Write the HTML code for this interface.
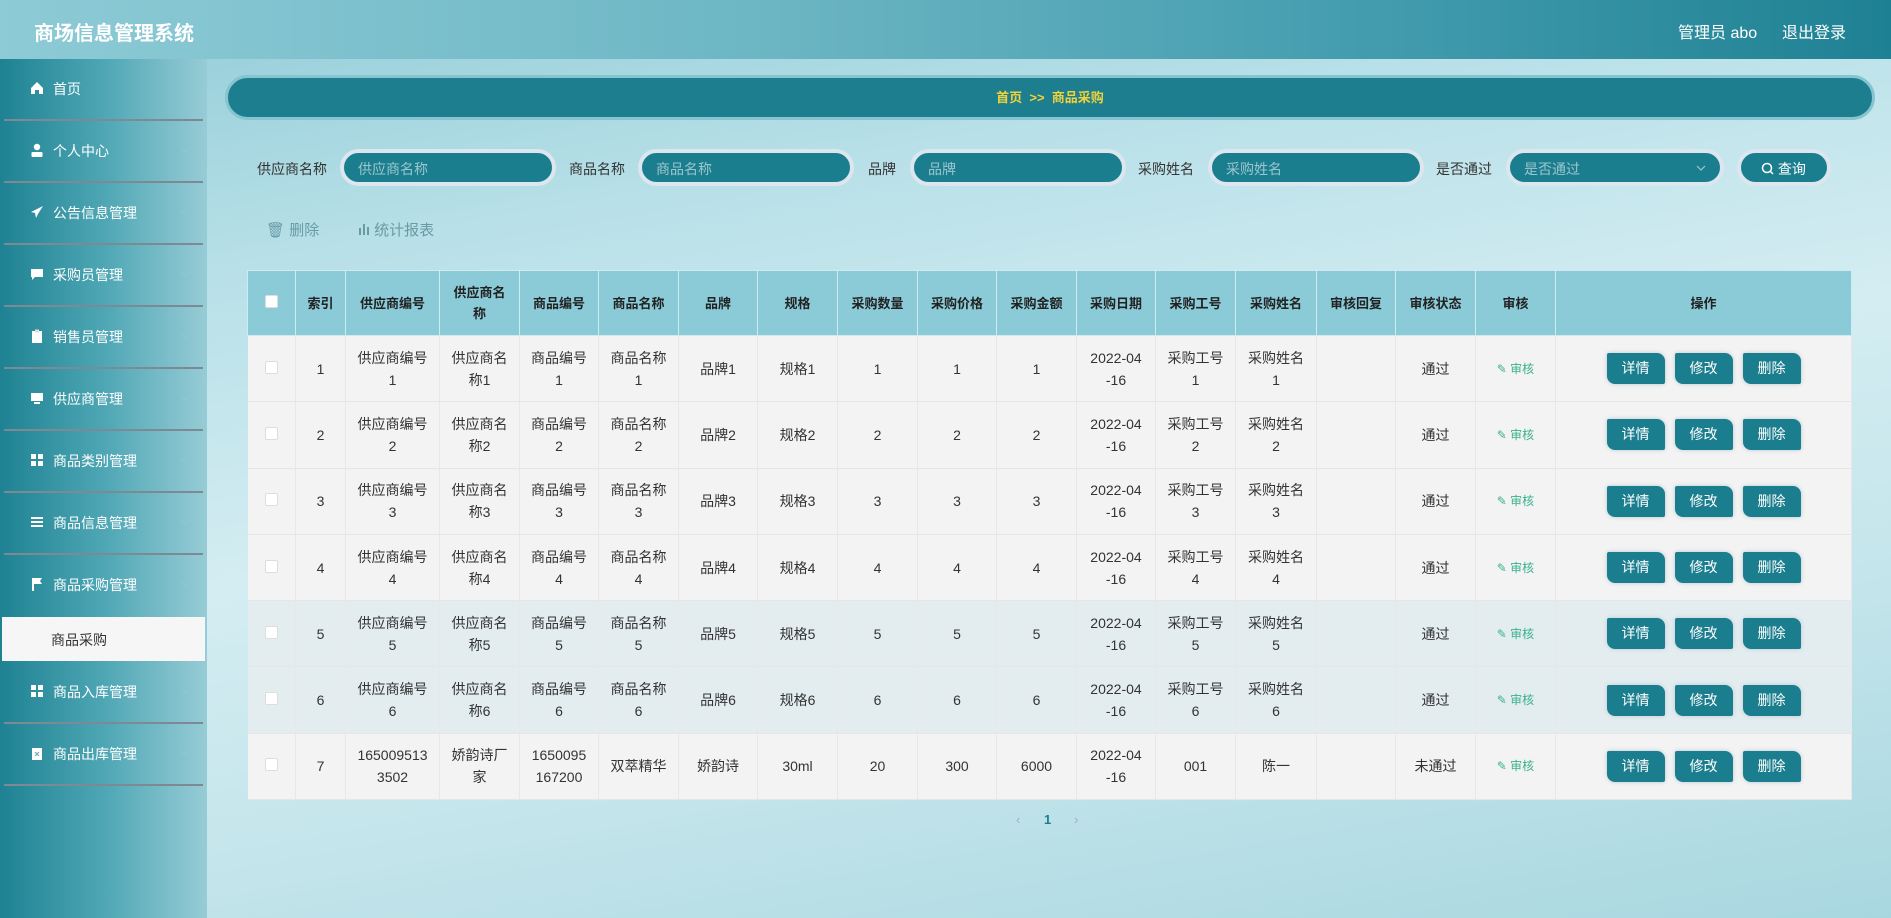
<!DOCTYPE html>
<html><head><meta charset="utf-8">
<style>
*{margin:0;padding:0;box-sizing:border-box}
body{width:1891px;height:918px;overflow:hidden;position:relative;font-family:"Liberation Sans","Noto Sans CJK SC",sans-serif;font-size:14px;color:#333;
background:linear-gradient(170deg,#8fcbd6 0%,#b8e0e8 25%,#d4edf2 50%,#c6e6ec 70%,#a9d7e0 100%);}
.hdr{position:absolute;left:0;top:0;width:1891px;height:59px;background:linear-gradient(90deg,#8dcbd6 0%,#6db6c4 40%,#3f9aac 75%,#1e8193 100%);}
.hdr .t{position:absolute;left:34px;top:17px;color:#fff;font-size:20px;font-weight:bold}
.hdr .r{position:absolute;top:19px;color:#fff;font-size:16px}
.side{position:absolute;left:0;top:59px;width:207px;height:859px;background:linear-gradient(90deg,#1e8292 0%,#4ea6b4 50%,#97ccd6 100%);}
.mi{position:absolute;left:0;width:207px;height:62px;color:#fff;font-size:14px}
.mi .ic{position:absolute;left:30px;top:22px;width:14px;height:14px}
.mi .tx{position:absolute;left:53px;top:20px}
.mi .ar{position:absolute;left:180px;top:26px;width:10px;height:6px}
.mi .ln{position:absolute;left:4px;right:4px;bottom:0;height:2px;background:#7d8a94}
.sub{position:absolute;left:2px;top:617px;width:203px;height:44px;background:#f6f6f6;color:#333;font-size:14px;padding:13px 0 0 49px}
.bc{position:absolute;left:225px;top:75px;width:1650px;height:45px;border-radius:23px;background:#1c7e8e;border:3px solid #86c4cf;text-align:center;color:#f0d23a;font-size:13px;font-weight:bold;line-height:39px}
.lbl{position:absolute;top:159px;font-size:14px;color:#333}
.inp{position:absolute;top:149px;height:37px;border-radius:19px;background:#1b7e8e;border:4px solid #dce6ee;color:#9cc6cf;font-size:14px;padding:6px 0 0 14px}
.btnq{position:absolute;left:1737px;top:149px;width:94px;height:37px;border-radius:19px;background:#1b7e8e;border:4px solid #dce6ee;color:#fff;font-size:14px;padding:6px 0 0 20px}
.tool{position:absolute;top:219px;color:#6a9aa6;font-size:15px}
table{position:absolute;left:247px;top:270px;width:1604px;border-collapse:collapse;table-layout:fixed}
th{background:#8acbd7;height:65px;font-size:13px;font-weight:bold;color:#222;border:1px solid #cfeaf0;line-height:21px}
td{height:66.3px;background:#f3f3f3;text-align:center;font-size:14px;color:#333;border-right:1px solid #e8e8e8;border-bottom:1px solid #e6e6e6;line-height:22px}
tr.h td{background:#e3edf0}
.cb{display:inline-block;width:13px;height:13px;background:#fff;border:1px solid #ddd;border-radius:2px}
.sh{color:#3ab28f;font-size:12px}
.b{display:inline-block;width:58px;height:31px;line-height:31px;background:#1b7e8e;color:#fff;font-size:14px;margin:0 5px;border-radius:2px 8px 2px 8px;box-shadow:0 0 4px #b8c8d0}
.pg{position:absolute;top:812px;font-size:13px}
</style></head><body>
<div class="hdr"><div class="t">商场信息管理系统</div><div class="r" style="left:1678px">管理员 abo</div><div class="r" style="left:1782px">退出登录</div></div>
<div class="side">
<div class="mi" style="top:0"><svg class="ic" viewBox="0 0 14 14"><path d="M7 1L1 7v6h4V9h4v4h4V7z" fill="#fff"/></svg><span class="tx">首页</span><div class="ln"></div></div>
<div class="mi" style="top:62px"><svg class="ic" viewBox="0 0 14 14"><circle cx="7" cy="4" r="3.2" fill="#fff"/><rect x="1.5" y="9" width="11" height="5" rx="1" fill="#fff"/></svg><span class="tx">个人中心</span><svg class="ar" viewBox="0 0 10 6"><path d="M1 1l4 4 4-4" fill="none" stroke="#8fc8d2" stroke-width="1"/></svg><div class="ln"></div></div>
<div class="mi" style="top:124px"><svg class="ic" viewBox="0 0 14 14"><path d="M13 1L1 7l4 1 1 5 2-4 5-8z" fill="#fff"/></svg><span class="tx">公告信息管理</span><svg class="ar" viewBox="0 0 10 6"><path d="M1 1l4 4 4-4" fill="none" stroke="#8fc8d2" stroke-width="1"/></svg><div class="ln"></div></div>
<div class="mi" style="top:186px"><svg class="ic" viewBox="0 0 14 14"><path d="M1 2h12v8H5l-3 3v-3H1z" fill="#fff"/></svg><span class="tx">采购员管理</span><svg class="ar" viewBox="0 0 10 6"><path d="M1 1l4 4 4-4" fill="none" stroke="#8fc8d2" stroke-width="1"/></svg><div class="ln"></div></div>
<div class="mi" style="top:248px"><svg class="ic" viewBox="0 0 14 14"><rect x="2" y="2" width="10" height="12" fill="#fff"/><rect x="5" y="0.5" width="4" height="3" fill="#ddd"/></svg><span class="tx">销售员管理</span><svg class="ar" viewBox="0 0 10 6"><path d="M1 1l4 4 4-4" fill="none" stroke="#8fc8d2" stroke-width="1"/></svg><div class="ln"></div></div>
<div class="mi" style="top:310px"><svg class="ic" viewBox="0 0 14 14"><rect x="1" y="2" width="12" height="8" fill="#fff"/><rect x="4" y="11" width="6" height="2" fill="#fff"/></svg><span class="tx">供应商管理</span><svg class="ar" viewBox="0 0 10 6"><path d="M1 1l4 4 4-4" fill="none" stroke="#8fc8d2" stroke-width="1"/></svg><div class="ln"></div></div>
<div class="mi" style="top:372px"><svg class="ic" viewBox="0 0 14 14"><rect x="1" y="1" width="5" height="5" fill="#fff"/><rect x="8" y="1" width="5" height="5" fill="#fff"/><rect x="1" y="8" width="5" height="5" fill="#fff"/><rect x="8" y="8" width="5" height="5" fill="#fff"/></svg><span class="tx">商品类别管理</span><svg class="ar" viewBox="0 0 10 6"><path d="M1 1l4 4 4-4" fill="none" stroke="#8fc8d2" stroke-width="1"/></svg><div class="ln"></div></div>
<div class="mi" style="top:434px"><svg class="ic" viewBox="0 0 14 14"><rect x="1" y="2" width="12" height="2" fill="#fff"/><rect x="1" y="6" width="12" height="2" fill="#fff"/><rect x="1" y="10" width="12" height="2" fill="#fff"/></svg><span class="tx">商品信息管理</span><svg class="ar" viewBox="0 0 10 6"><path d="M1 1l4 4 4-4" fill="none" stroke="#8fc8d2" stroke-width="1"/></svg><div class="ln"></div></div>
<div class="mi" style="top:496px"><svg class="ic" viewBox="0 0 14 14"><path d="M2 1h10l-2 3 2 3H4v7H2z" fill="#fff"/></svg><span class="tx">商品采购管理</span><svg class="ar" viewBox="0 0 10 6"><path d="M1 1l4 4 4-4" fill="none" stroke="#8fc8d2" stroke-width="1"/></svg></div>
<div class="mi" style="top:603px"><svg class="ic" viewBox="0 0 14 14"><rect x="1" y="1" width="5" height="5" fill="#fff"/><rect x="8" y="1" width="5" height="5" fill="#fff"/><rect x="1" y="8" width="5" height="5" fill="#fff"/><rect x="8" y="8" width="5" height="5" fill="#fff"/></svg><span class="tx">商品入库管理</span><svg class="ar" viewBox="0 0 10 6"><path d="M1 1l4 4 4-4" fill="none" stroke="#8fc8d2" stroke-width="1"/></svg><div class="ln"></div></div>
<div class="mi" style="top:665px"><svg class="ic" viewBox="0 0 14 14"><rect x="2" y="2" width="10" height="12" fill="#fff"/><path d="M5 6l4 4M9 6l-4 4" stroke="#6aaab6" stroke-width="1.2"/></svg><span class="tx">商品出库管理</span><svg class="ar" viewBox="0 0 10 6"><path d="M1 1l4 4 4-4" fill="none" stroke="#8fc8d2" stroke-width="1"/></svg><div class="ln"></div></div>
</div>
<div class="sub" style="top:617px">商品采购</div>
<div class="bc">首页 &nbsp;&gt;&gt;&nbsp; 商品采购</div>
<div class="lbl" style="left:257px">供应商名称</div><div class="inp" style="left:340px;width:216px">供应商名称</div>
<div class="lbl" style="left:569px">商品名称</div><div class="inp" style="left:638px;width:216px">商品名称</div>
<div class="lbl" style="left:868px">品牌</div><div class="inp" style="left:910px;width:216px">品牌</div>
<div class="lbl" style="left:1138px">采购姓名</div><div class="inp" style="left:1208px;width:216px">采购姓名</div>
<div class="lbl" style="left:1436px">是否通过</div><div class="inp" style="left:1506px;width:218px">是否通过<svg style="position:absolute;right:14px;top:12px" width="10" height="6" viewBox="0 0 10 6"><path d="M1 1l4 4 4-4" fill="none" stroke="#9cc6cf" stroke-width="1.2"/></svg></div>
<div class="btnq"><svg width="13" height="13" viewBox="0 0 13 13" style="vertical-align:-1px"><circle cx="6" cy="6" r="4.5" fill="none" stroke="#fff" stroke-width="1.5"/><path d="M9.5 9.5L12 12" stroke="#fff" stroke-width="1.5"/></svg> 查询</div>
<div class="tool" style="left:266px">🗑︎ 删除</div>
<div class="tool" style="left:358px"><svg width="12" height="12" viewBox="0 0 12 12"><rect x="1" y="5" width="2" height="7" fill="#6a9aa6"/><rect x="5" y="1" width="2" height="11" fill="#6a9aa6"/><rect x="9" y="4" width="2" height="8" fill="#6a9aa6"/></svg> 统计报表</div>
<table>
<colgroup><col style="width:48px"><col style="width:50px"><col style="width:94px"><col style="width:80px"><col style="width:79px"><col style="width:80px"><col style="width:79px"><col style="width:80px"><col style="width:80px"><col style="width:79px"><col style="width:80px"><col style="width:79px"><col style="width:80px"><col style="width:81px"><col style="width:79px"><col style="width:80px"><col style="width:80px"><col style="width:296px"></colgroup>
<tr><th><span class="cb"></span></th><th>索引</th><th>供应商编号</th><th>供应商名<br>称</th><th>商品编号</th><th>商品名称</th><th>品牌</th><th>规格</th><th>采购数量</th><th>采购价格</th><th>采购金额</th><th>采购日期</th><th>采购工号</th><th>采购姓名</th><th>审核回复</th><th>审核状态</th><th>审核</th><th>操作</th></tr>
<tr><td><span class="cb"></span></td><td>1</td><td>供应商编号<br>1</td><td>供应商名<br>称1</td><td>商品编号<br>1</td><td>商品名称<br>1</td><td>品牌1</td><td>规格1</td><td>1</td><td>1</td><td>1</td><td>2022-04<br>-16</td><td>采购工号<br>1</td><td>采购姓名<br>1</td><td></td><td>通过</td><td class="sh">✎ 审核</td><td><span class="b">详情</span><span class="b">修改</span><span class="b">删除</span></td></tr>
<tr><td><span class="cb"></span></td><td>2</td><td>供应商编号<br>2</td><td>供应商名<br>称2</td><td>商品编号<br>2</td><td>商品名称<br>2</td><td>品牌2</td><td>规格2</td><td>2</td><td>2</td><td>2</td><td>2022-04<br>-16</td><td>采购工号<br>2</td><td>采购姓名<br>2</td><td></td><td>通过</td><td class="sh">✎ 审核</td><td><span class="b">详情</span><span class="b">修改</span><span class="b">删除</span></td></tr>
<tr><td><span class="cb"></span></td><td>3</td><td>供应商编号<br>3</td><td>供应商名<br>称3</td><td>商品编号<br>3</td><td>商品名称<br>3</td><td>品牌3</td><td>规格3</td><td>3</td><td>3</td><td>3</td><td>2022-04<br>-16</td><td>采购工号<br>3</td><td>采购姓名<br>3</td><td></td><td>通过</td><td class="sh">✎ 审核</td><td><span class="b">详情</span><span class="b">修改</span><span class="b">删除</span></td></tr>
<tr><td><span class="cb"></span></td><td>4</td><td>供应商编号<br>4</td><td>供应商名<br>称4</td><td>商品编号<br>4</td><td>商品名称<br>4</td><td>品牌4</td><td>规格4</td><td>4</td><td>4</td><td>4</td><td>2022-04<br>-16</td><td>采购工号<br>4</td><td>采购姓名<br>4</td><td></td><td>通过</td><td class="sh">✎ 审核</td><td><span class="b">详情</span><span class="b">修改</span><span class="b">删除</span></td></tr>
<tr class="h"><td><span class="cb"></span></td><td>5</td><td>供应商编号<br>5</td><td>供应商名<br>称5</td><td>商品编号<br>5</td><td>商品名称<br>5</td><td>品牌5</td><td>规格5</td><td>5</td><td>5</td><td>5</td><td>2022-04<br>-16</td><td>采购工号<br>5</td><td>采购姓名<br>5</td><td></td><td>通过</td><td class="sh">✎ 审核</td><td><span class="b">详情</span><span class="b">修改</span><span class="b">删除</span></td></tr>
<tr class="h"><td><span class="cb"></span></td><td>6</td><td>供应商编号<br>6</td><td>供应商名<br>称6</td><td>商品编号<br>6</td><td>商品名称<br>6</td><td>品牌6</td><td>规格6</td><td>6</td><td>6</td><td>6</td><td>2022-04<br>-16</td><td>采购工号<br>6</td><td>采购姓名<br>6</td><td></td><td>通过</td><td class="sh">✎ 审核</td><td><span class="b">详情</span><span class="b">修改</span><span class="b">删除</span></td></tr>
<tr><td><span class="cb"></span></td><td>7</td><td>165009513<br>3502</td><td>娇韵诗厂<br>家</td><td>1650095<br>167200</td><td>双萃精华</td><td>娇韵诗</td><td>30ml</td><td>20</td><td>300</td><td>6000</td><td>2022-04<br>-16</td><td>001</td><td>陈一</td><td></td><td>未通过</td><td class="sh">✎ 审核</td><td><span class="b">详情</span><span class="b">修改</span><span class="b">删除</span></td></tr>
</table>
<div class="pg" style="left:1016px;color:#aac">‹</div>
<div class="pg" style="left:1044px;color:#1b7e8e;font-weight:bold">1</div>
<div class="pg" style="left:1074px;color:#aac">›</div>
</body></html>
